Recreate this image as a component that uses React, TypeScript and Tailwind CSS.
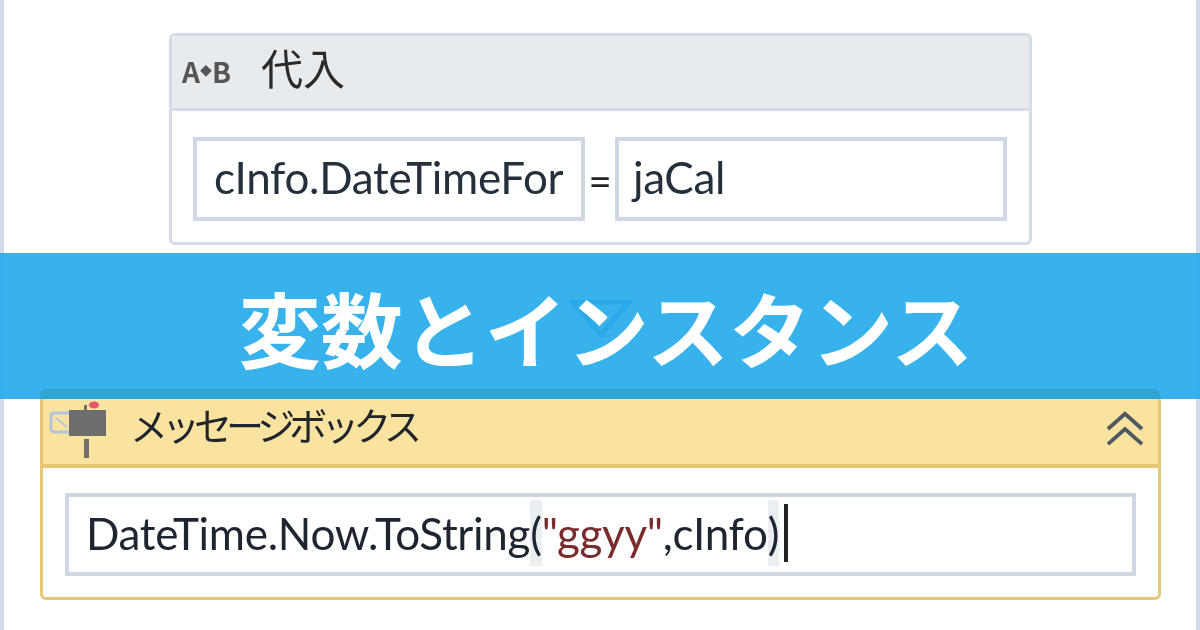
import React from 'react';

const latin = "font-['Lato','Noto_Sans_CJK_JP',sans-serif]";
const jp = "font-['Noto_Sans_CJK_JP',sans-serif]";

const Field = ({ className = '', children }: { className?: string; children: React.ReactNode }) => (
  <div className={`flex items-center overflow-hidden border-[4px] border-[#cfd7e4] bg-white ${className}`}>
    {children}
  </div>
);

const Mailbox = () => (
  <svg width="68" height="62" viewBox="0 0 68 62" className="shrink-0">
    <rect x="3" y="15" width="22" height="19" rx="3" fill="none" stroke="#b4c6dc" strokeWidth="3" />
    <path d="M8 20l11 9" stroke="#b4c6dc" strokeWidth="2" />
    <rect x="21" y="12" width="37" height="26" fill="#6d6d6d" />
    <rect x="36" y="7" width="3" height="6" fill="#6d6d6d" />
    <ellipse cx="46" cy="7" rx="5" ry="3.5" fill="#e8546a" />
    <rect x="36" y="41" width="5" height="19" fill="#6f6f6f" />
  </svg>
);

export default function App() {
  return (
    <div className="relative h-[630px] w-[1200px] overflow-hidden bg-white">
      <div className="h-full border-x-[4px] border-[#d3dbe8] blur-[0.5px]">
        {/* assign card */}
        <div className="ml-[165px] pt-[33px]">
          <div className="h-[212px] w-[863px] overflow-hidden rounded-md border-[3px] border-[#d5dce8]">
            <div className={`flex h-[75px] items-center border-b-[3px] border-[#d5dce8] bg-[#e8ebed] pl-[10px] ${jp}`}>
              <span className="flex w-[70px] items-center pb-[2px] text-[28px] font-bold leading-none text-[#555]">
                <span>A</span>
                <span className="text-[12px]">◆</span>
                <span>B</span>
              </span>
              <span className="mb-[10px] ml-[9px] text-[42px] leading-none text-[#2b2b2b]">代入</span>
            </div>
            <div className="flex items-start pl-[21px] pt-[26px]">
              <Field className={`h-[84px] w-[392px] pb-[5px] pl-[17px] ${latin}`}>
                <span className="w-[351px] overflow-hidden whitespace-nowrap text-[44px] tracking-[-0.3px] text-[#25303c]">
                  cInfo.DateTimeFormat
                </span>
              </Field>
              <span className={`w-[30px] pt-[24px] text-center text-[40px] leading-none text-[#222] ${latin}`}>=</span>
              <Field className={`h-[84px] w-[392px] pb-[5px] pl-[14px] ${latin}`}>
                <span className="text-[44px] tracking-[-0.3px] text-[#25303c]">jaCal</span>
              </Field>
            </div>
          </div>
        </div>

        {/* message box card */}
        <div className="ml-[36px] mt-[145px] h-[210px] w-[1121px] overflow-hidden rounded-md border-[3px] border-[#e6c878]">
          <div className={`flex h-[75px] items-center border-b-[4px] border-[#e6c670] bg-[#fae39e] pl-[5px] pr-[14px] ${jp}`}>
            <Mailbox />
            <span className="mb-[10px] ml-[14px] text-[38px] leading-none tracking-[-6px] text-[#20242c]">メッセージボックス</span>
            <svg width="38" height="36" viewBox="0 0 40 38" className="ml-auto" fill="none" stroke="#4f5a60" strokeWidth="4">
              <path d="M2 19L20 3l18 16M2 35l18-16 18 16" />
            </svg>
          </div>
          <div className="pl-[22px] pt-[25px]">
            <Field className={`h-[83px] w-[1071px] pb-[4px] pl-[17px] ${latin}`}>
              <span className="flex items-center whitespace-nowrap text-[44px] tracking-[-0.3px] text-[#1f2530]">
                DateTime.Now.ToString<span className="bg-[#eceff2]">(</span>
                <span className="text-[#7a2c2c]">"ggyy"</span>,cInfo<span className="bg-[#eceff2]">)</span>
                <span className="ml-[5px] h-[58px] w-[4px] bg-[#222]" />
              </span>
            </Field>
          </div>
        </div>
      </div>

      {/* title banner */}
      <div className="absolute left-0 top-[253px] flex h-[146px] w-[1200px] items-center justify-center bg-[#2daeec]/95">
        <svg width="62" height="38" viewBox="0 0 62 38" className="absolute left-[570px] top-[47px]">
          <path d="M3 2h56L31 35z" fill="none" stroke="#2ba8e6" strokeWidth="5" />
        </svg>
        <div className="absolute bottom-0 left-[40px] h-[10px] w-[1120px] rounded-t-md bg-[#2fa5d3]" />
        <span className={`relative ml-[12px] pt-[2px] text-[82px] font-bold leading-none text-white ${jp}`}>変数とインスタンス</span>
      </div>
    </div>
  );
}
